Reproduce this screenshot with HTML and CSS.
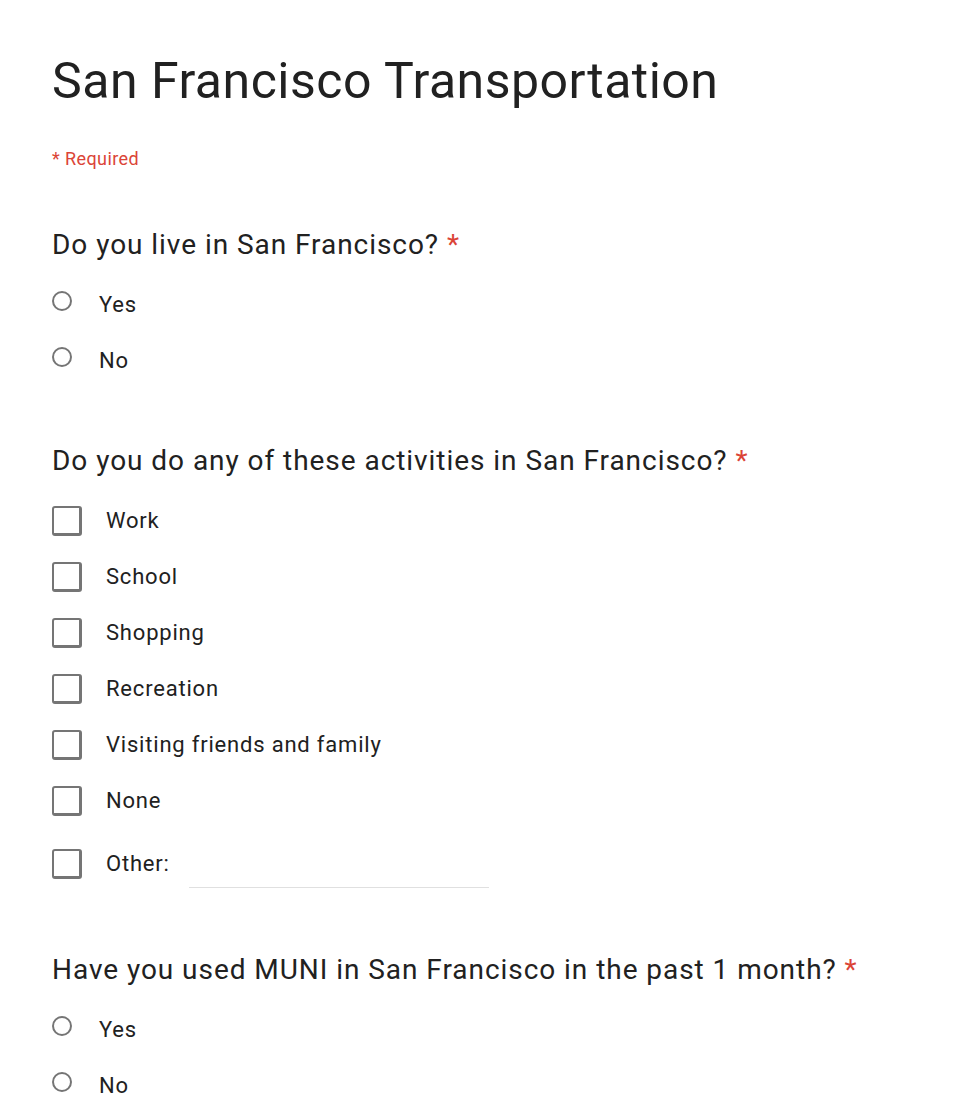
FILE: index.html
```html
<!DOCTYPE html>
<html>
<head>
<meta charset="utf-8">
<link rel="stylesheet" href="styles.css">
</head>
<body>
<main class="form">
  <h1 class="title">San Francisco Transportation</h1>
  <div class="required-note">* Required</div>

  <section class="question">
    <h2 class="q-title">Do you live in San Francisco? <span class="star">*</span></h2>
    <div class="options">
      <label class="opt"><span class="radio"></span><span class="radio-label">Yes</span></label>
      <label class="opt"><span class="radio"></span><span class="radio-label">No</span></label>
    </div>
  </section>

  <section class="question">
    <h2 class="q-title">Do you do any of these activities in San Francisco? <span class="star">*</span></h2>
    <div class="options">
      <label class="opt"><span class="check"></span><span class="check-label">Work</span></label>
      <label class="opt"><span class="check"></span><span class="check-label">School</span></label>
      <label class="opt"><span class="check"></span><span class="check-label">Shopping</span></label>
      <label class="opt"><span class="check"></span><span class="check-label">Recreation</span></label>
      <label class="opt"><span class="check"></span><span class="check-label">Visiting friends and family</span></label>
      <label class="opt"><span class="check"></span><span class="check-label">None</span></label>
      <label class="opt opt-other"><span class="check"></span><span class="check-label">Other:</span><span class="other-input"></span></label>
    </div>
  </section>

  <section class="question">
    <h2 class="q-title">Have you used MUNI in San Francisco in the past 1 month? <span class="star">*</span></h2>
    <div class="options">
      <label class="opt"><span class="radio"></span><span class="radio-label">Yes</span></label>
      <label class="opt"><span class="radio"></span><span class="radio-label">No</span></label>
    </div>
  </section>
</main>
</body>
</html>
```

FILE: styles.css
```css
html, body {
  margin: 0;
  padding: 0;
  background: #ffffff;
}

body {
  font-family: Roboto, "Noto Sans", Arial, sans-serif;
  color: #212121;
}

.form {
  padding: 52px 0 0 52px;
}

.title {
  margin: 0;
  font-size: 50px;
  line-height: 58px;
  font-weight: 400;
  letter-spacing: 0.5px;
  color: #212121;
}

.required-note {
  margin-top: 39px;
  font-size: 18px;
  line-height: 20px;
  letter-spacing: 0.4px;
  color: #db4437;
}

.question {
  margin-top: 60px;
}

.q-title {
  margin: 0;
  font-size: 28px;
  line-height: 32px;
  font-weight: 400;
  letter-spacing: 0.95px;
  color: #212121;
}

.star {
  color: #db4437;
}

.options {
  display: flex;
  flex-direction: column;
  margin-top: 12px;
}

.opt {
  display: flex;
  align-items: flex-start;
  height: 56px;
}

.radio {
  box-sizing: border-box;
  width: 20px;
  height: 20px;
  margin-top: 18px;
  border: 2px solid #757575;
  border-radius: 50%;
  flex: none;
}

.radio-label {
  margin-left: 27px;
  margin-top: 20px;
  font-size: 22px;
  line-height: 24px;
  letter-spacing: 0.8px;
  color: #212121;
}

.check {
  box-sizing: border-box;
  width: 30px;
  height: 30px;
  margin-top: 17px;
  border: 2px solid #757575;
  border-right-width: 3px;
  border-bottom-width: 3px;
  border-radius: 3px;
  flex: none;
}

.check-label {
  margin-left: 24px;
  margin-top: 20px;
  font-size: 22px;
  line-height: 24px;
  letter-spacing: 0.8px;
  color: #212121;
}

.opt-other {
  margin-top: 7px;
  height: 62px;
}

.other-input {
  width: 300px;
  height: 40px;
  margin-left: 19px;
  margin-top: 15px;
  border-bottom: 1px solid #e0e0e0;
}
```
